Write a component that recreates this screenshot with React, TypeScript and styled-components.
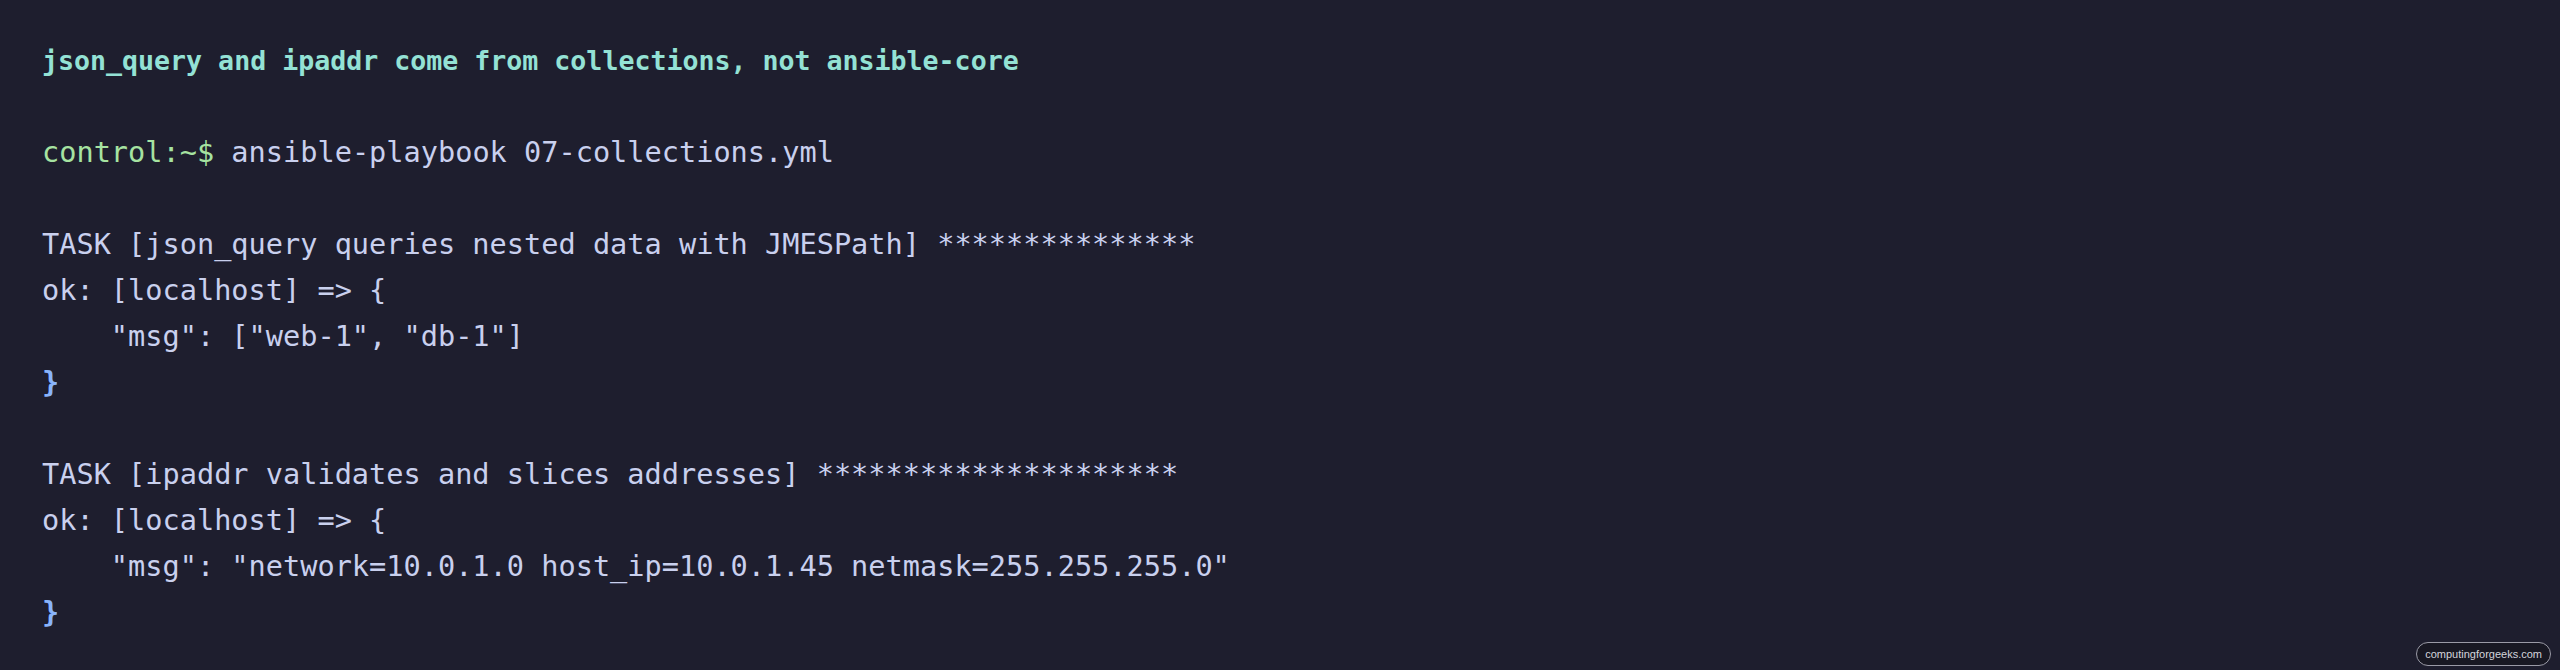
import React from "react";
import styled, { createGlobalStyle } from "styled-components";

const GlobalStyle = createGlobalStyle`
  html, body {
    margin: 0;
    padding: 0;
    background: #1e1e2e;
  }
  #root {
    min-height: 100vh;
  }
`;

const Page = styled.div`
  position: relative;
  box-sizing: border-box;
  width: 100%;
  min-height: 670px;
  background: #1e1e2e;
  padding: 38px 42px 0 42px;
  display: flex;
  flex-direction: column;
`;

const Title = styled.div`
  font-family: "DejaVu Sans Mono", "Liberation Mono", monospace;
  font-weight: bold;
  font-size: 26.6px;
  line-height: 46px;
  height: 46px;
  color: #94e2d5;
  white-space: pre;
`;

const Output = styled.div`
  margin-top: 45px;
  display: flex;
  flex-direction: column;
  font-family: "DejaVu Sans Mono", "Liberation Mono", monospace;
  font-size: 28.6px;
  line-height: 46px;
  color: #c9d0ee;
`;

const Line = styled.div`
  height: 46px;
  white-space: pre;
`;

const Tone = styled.span<{ $tone: "prompt" | "brace" }>`
  color: ${(p) => (p.$tone === "prompt" ? "#a6e3a1" : "#89b4fa")};
  font-weight: ${(p) => (p.$tone === "brace" ? "bold" : "normal")};
`;

const Badge = styled.div`
  position: absolute;
  right: 9px;
  bottom: 4px;
  height: 22px;
  padding: 0 8px;
  border: 1px solid #9a9aa6;
  border-radius: 12px;
  background: rgba(20, 20, 28, 0.6);
  color: #d4d4dc;
  font-family: "Liberation Sans", Arial, sans-serif;
  font-size: 11px;
  line-height: 22px;
  display: flex;
  align-items: center;
`;

type Block = {
  task: string;
  msg: string;
};

const blocks: Block[] = [
  {
    task: "TASK [json_query queries nested data with JMESPath] " + "*".repeat(15),
    msg: '    "msg": ["web-1", "db-1"]',
  },
  {
    task: "TASK [ipaddr validates and slices addresses] " + "*".repeat(21),
    msg: '    "msg": "network=10.0.1.0 host_ip=10.0.1.45 netmask=255.255.255.0"',
  },
];

export default function App() {
  return (
    <>
      <GlobalStyle />
      <Page>
        <Title>json_query and ipaddr come from collections, not ansible-core</Title>
        <Output>
          <Line>
            <Tone $tone="prompt">control:~$</Tone> ansible-playbook 07-collections.yml
          </Line>
          {blocks.map((b, i) => (
            <React.Fragment key={i}>
              <Line> </Line>
              <Line>{b.task}</Line>
              <Line>{"ok: [localhost] => {"}</Line>
              <Line>{b.msg}</Line>
              <Line>
                <Tone $tone="brace">{"}"}</Tone>
              </Line>
            </React.Fragment>
          ))}
        </Output>
        <Badge>computingforgeeks.com</Badge>
      </Page>
    </>
  );
}
